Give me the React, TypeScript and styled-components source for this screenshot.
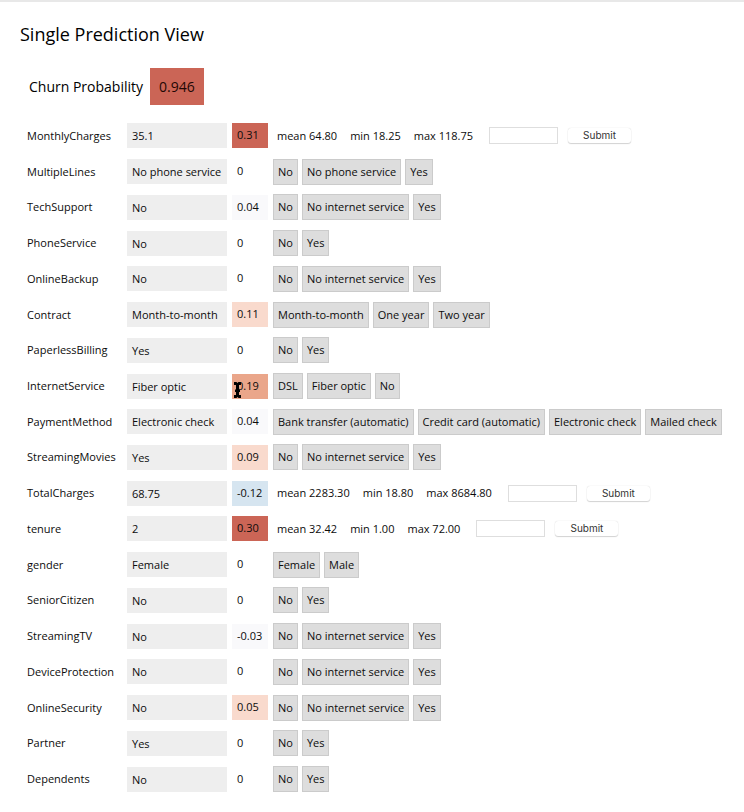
import React from "react";
import styled, { createGlobalStyle } from "styled-components";

const GlobalStyle = createGlobalStyle`
  *, *::before, *::after { box-sizing: border-box; }
  body {
    margin: 0;
    background: #fff;
    color: #0c0c0c;
    font-family: "Open Sans", "Noto Sans", sans-serif;
    font-size: 11px;
    line-height: 16px;
  }
`;

const Page = styled.main`
  display: flex;
  flex-direction: column;
  min-height: 100vh;
  padding: 20px 16px 15px 20px;
  border-top: 2px solid #e8e8e8;
`;

const Title = styled.h1`
  margin: 0;
  font-size: 18px;
  font-weight: 400;
  line-height: 24px;
  color: #000;
`;

const Summary = styled.div`
  display: flex;
  align-items: center;
  gap: 7px;
  margin: 22px 0 13px 9px;
  font-size: 14px;
  line-height: 17px;
  color: #000;
`;

const Probability = styled.output`
  padding: 10px 9px;
  background: #cb6556;
  color: #1f0805;
`;

const Features = styled.table`
  display: flex;
  flex: 1;
  flex-direction: column;
`;

const Body = styled.tbody`
  display: grid;
  flex: 1;
  grid-auto-rows: 1fr;
`;

const Row = styled.tr`
  display: grid;
  grid-template-columns: 102px 100px 36px 1fr;
  align-items: center;
  column-gap: 5px;
`;

const Name = styled.th`
  padding: 0 0 0 7px;
  font-weight: 400;
  text-align: left;
`;

const Value = styled.td`
  padding: 5px 5px 4px;
  background: #eee;
  white-space: nowrap;
`;

const Score = styled.td<{ $tone: string }>`
  padding: 4px 5px 5px;
  background: ${(p) => p.$tone};
`;

const Controls = styled.td`
  display: flex;
  align-items: center;
  gap: 4px;
  padding: 0;
  white-space: nowrap;
`;

const Option = styled.button`
  padding: 4px;
  border: 1px solid #cbcbcb;
  background: #ddd;
  color: inherit;
  font: inherit;
`;

const NumericForm = styled.form`
  display: flex;
  align-items: center;
  padding-left: 4px;
`;

const Stat = styled.span`
  margin-right: 13px;
`;

const NumberInput = styled.input`
  width: 69px;
  height: 17px;
  margin: 0 10px 0 3px;
  padding: 0 3px;
  border: 1px solid #dedede;
  background: #fff;
  font: inherit;
`;

const Submit = styled.button`
  width: 63px;
  height: 15px;
  padding: 0;
  border: 0;
  border-radius: 3px;
  background: #fff;
  box-shadow: 0 0 1px #ccc, 0 1px 1px #d4d4d4;
  color: #333;
  font: 10px/15px Inter, "Liberation Sans", sans-serif;
`;

const Cursor = styled.svg`
  position: absolute;
  top: 7px;
  left: 1px;
  width: 9px;
  height: 18px;
  pointer-events: none;
`;

const PointedScore = styled(Score)`
  position: relative;
`;

type Feature = {
  name: string;
  value: string;
  score: string;
  options?: string[];
  stats?: string[];
};

const yesNo = ["No", "Yes"];
const internet = ["No", "No internet service", "Yes"];

const features: Feature[] = [
  { name: "MonthlyCharges", value: "35.1", score: "0.31", stats: ["mean 64.80", "min 18.25", "max 118.75"] },
  { name: "MultipleLines", value: "No phone service", score: "0", options: ["No", "No phone service", "Yes"] },
  { name: "TechSupport", value: "No", score: "0.04", options: internet },
  { name: "PhoneService", value: "No", score: "0", options: yesNo },
  { name: "OnlineBackup", value: "No", score: "0", options: internet },
  { name: "Contract", value: "Month-to-month", score: "0.11", options: ["Month-to-month", "One year", "Two year"] },
  { name: "PaperlessBilling", value: "Yes", score: "0", options: yesNo },
  { name: "InternetService", value: "Fiber optic", score: "0.19", options: ["DSL", "Fiber optic", "No"] },
  {
    name: "PaymentMethod",
    value: "Electronic check",
    score: "0.04",
    options: ["Bank transfer (automatic)", "Credit card (automatic)", "Electronic check", "Mailed check"],
  },
  { name: "StreamingMovies", value: "Yes", score: "0.09", options: internet },
  { name: "TotalCharges", value: "68.75", score: "-0.12", stats: ["mean 2283.30", "min 18.80", "max 8684.80"] },
  { name: "tenure", value: "2", score: "0.30", stats: ["mean 32.42", "min 1.00", "max 72.00"] },
  { name: "gender", value: "Female", score: "0", options: ["Female", "Male"] },
  { name: "SeniorCitizen", value: "No", score: "0", options: yesNo },
  { name: "StreamingTV", value: "No", score: "-0.03", options: internet },
  { name: "DeviceProtection", value: "No", score: "0", options: internet },
  { name: "OnlineSecurity", value: "No", score: "0.05", options: internet },
  { name: "Partner", value: "Yes", score: "0", options: yesNo },
  { name: "Dependents", value: "No", score: "0", options: yesNo },
];

function toneOf(score: string) {
  const n = Number(score);
  if (n >= 0.3) return "#cb6556";
  if (n >= 0.15) return "#eaa68a";
  if (n >= 0.05) return "#f9dacd";
  if (n <= -0.1) return "#d6e5f0";
  if (n !== 0) return "#f9f9fb";
  return "transparent";
}

function TextCursor() {
  return (
    <Cursor viewBox="0 0 9 18" aria-hidden="true">
      <path d="M1 1h2.500l1 1 1-1H8v3H6v4.500h1v2.500H6V14h2v3H5.500l-1-1-1 1H1v-3h2v-3H2V8.500h1V4H1z" fill="#000" />
    </Cursor>
  );
}

function FeatureRow({ feature }: { feature: Feature }) {
  const { name, value, score, options, stats } = feature;
  const pointed = name === "InternetService";
  return (
    <Row>
      <Name scope="row">{name}</Name>
      <Value>{value}</Value>
      {pointed ? (
        <PointedScore $tone={toneOf(score)}>
          {score}
          <TextCursor />
        </PointedScore>
      ) : (
        <Score $tone={toneOf(score)}>{score}</Score>
      )}
      <Controls>
        {options?.map((o) => (
          <Option key={o} type="button">
            {o}
          </Option>
        ))}
        {stats && (
          <NumericForm onSubmit={(e) => e.preventDefault()}>
            {stats.map((s) => (
              <Stat key={s}>{s}</Stat>
            ))}
            <NumberInput type="text" aria-label={name} />
            <Submit type="submit">Submit</Submit>
          </NumericForm>
        )}
      </Controls>
    </Row>
  );
}

export default function App() {
  return (
    <>
      <GlobalStyle />
      <Page>
        <Title>Single Prediction View</Title>
        <Summary>
          <label htmlFor="churn">Churn Probability</label>
          <Probability id="churn">0.946</Probability>
        </Summary>
        <Features>
          <Body>
            {features.map((f) => (
              <FeatureRow key={f.name} feature={f} />
            ))}
          </Body>
        </Features>
      </Page>
    </>
  );
}
